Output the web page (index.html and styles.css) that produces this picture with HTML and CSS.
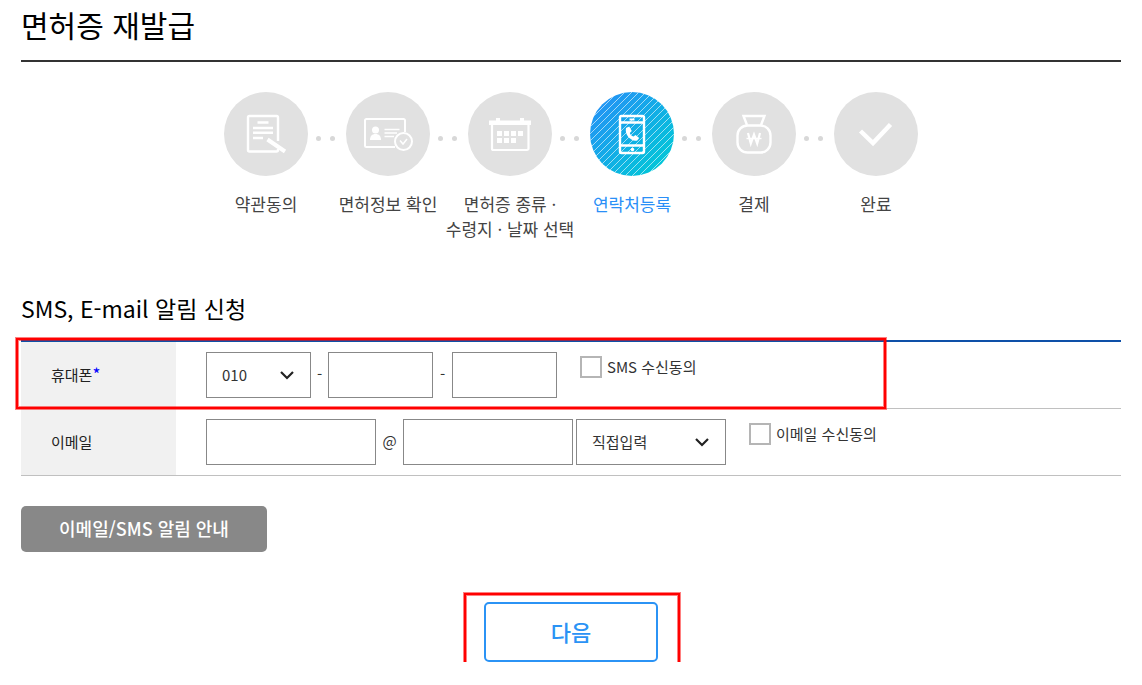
FILE: index.html
```html
<!DOCTYPE html>
<html lang="ko">
<head>
    <meta charset="UTF-8">
    <meta name="viewport" content="width=device-width, initial-scale=1.0">
    <title>면허증 재발급</title>
    <link rel="stylesheet" href="styles.css">
</head>
<body>

<div class="container">
    <h1>면허증 재발급</h1>

    <ol class="steps">
        <li>
            <span class="circle">
                <svg width="84" height="84" viewBox="0 0 84 84" fill="none" stroke="#fff" stroke-width="2.4">
                    <path d="M54 49V25.5a1.500 1.500 0 0 0-1.500-1.500H25.500a1.500 1.500 0 0 0-1.500 1.500V58a1.500 1.500 0 0 0 1.500 1.500H52.500a1.500 1.500 0 0 0 1.500-1.500V57"/>
                    <path d="M33.500 30.500h11M29 36h20M29 40.700h20M29 46h10"/>
                    <path d="M43.500 47.500L61 59.500" stroke-width="4"/>
                </svg>
            </span>
            <span class="label">약관동의</span>
        </li>
        <li>
            <span class="circle">
                <svg width="84" height="84" viewBox="0 0 84 84" fill="none" stroke="#fff" stroke-width="2">
                    <path d="M59 40V28.500a1.500 1.500 0 0 0-1.500-1.500H20.500a1.500 1.500 0 0 0-1.500 1.500V53.500a1.500 1.500 0 0 0 1.500 1.500H49"/>
                    <circle cx="29.500" cy="38" r="3.500" fill="#fff" stroke="none"/>
                    <path d="M24 48c0-4 2-6 5.500-6s5.500 2 5.500 6z" fill="#fff" stroke="none"/>
                    <path d="M38.500 37.500h15M38.500 41h12.500M38.500 44.500h9.500" stroke-width="1.400"/>
                    <circle cx="57.500" cy="49.500" r="8.500"/>
                    <path d="M54 48.500l3 3.500 4-5" stroke-width="1.500"/>
                </svg>
            </span>
            <span class="label">면허정보 확인</span>
        </li>
        <li>
            <span class="circle">
                <svg width="84" height="84" viewBox="0 0 84 84" fill="#fff">
                    <path d="M21 28.500h7V26h4v2.500h20V26h4v2.500h7V33H21z"/>
                    <path d="M24 32v24.500a1.500 1.500 0 0 0 1.500 1.500H59a1.500 1.500 0 0 0 1.500-1.500V32" fill="none" stroke="#fff" stroke-width="2.200"/>
                    <path d="M29 39h5v5h-5zM36 39h5v5h-5zM43 39h5v5h-5zM50 39h5v5h-5zM29 46h5v5h-5zM36 46h5v5h-5zM43 46h5v5h-5z"/>
                </svg>
            </span>
            <span class="label">면허증 종류 ·<br>수령지 · 날짜 선택</span>
        </li>
        <li class="on">
            <span class="circle">
                <svg width="84" height="84" viewBox="0 0 84 84" fill="none" stroke="#fff" stroke-width="2.4">
                    <defs>
                        <pattern id="stripes" width="7" height="7" patternUnits="userSpaceOnUse">
                            <path d="M-1 8L8-1M-1 1L1-1M6 8L8 6" stroke="#fff" stroke-opacity="0.75" stroke-width="0.8"/>
                        </pattern>
                    </defs>
                    <circle cx="42" cy="42" r="42" fill="url(#stripes)" stroke="none"/>
                    <rect x="30" y="24" width="24" height="37" rx="1.500"/>
                    <path d="M30 30.500h24M30 53.500h24"/>
                    <path d="M39.500 27.500h5" stroke-width="2"/>
                    <circle cx="42.500" cy="57.500" r="1.800" fill="#fff" stroke="none"/>
                    <path d="M36 36l3.200-1.500 2.600 4.600-2 1.800c.7 1.700 1.900 2.900 3.700 3.700l2-1.700 3.700 3-2 2.600c-6 1.500-12.800-5.500-11.200-12.500z" fill="#fff" stroke="none"/>
                </svg>
            </span>
            <span class="label">연락처등록</span>
        </li>
        <li>
            <span class="circle">
                <svg width="84" height="84" viewBox="0 0 84 84" fill="none" stroke="#fff" stroke-width="2.4">
                    <path d="M35 33l-3.500-9h21L49 33"/>
                    <rect x="25.500" y="33.500" width="33" height="27" rx="10"/>
                    <path d="M36 41l2.800 10.500L42 42.500l3.200 9L48 41" stroke-width="2.200"/>
                    <path d="M34.500 46.500h15" stroke-width="1.400"/>
                </svg>
            </span>
            <span class="label">결제</span>
        </li>
        <li>
            <span class="circle">
                <svg width="84" height="84" viewBox="0 0 84 84" fill="none" stroke="#fff" stroke-width="4.500">
                    <path d="M26.500 39L39 51l17.500-18.500"/>
                </svg>
            </span>
            <span class="label">완료</span>
        </li>
    </ol>

    <form id="contactForm">
        <h2>SMS, E-mail 알림 신청</h2>
        <div class="table-wrap">
            <table>
                <tr>
                    <th scope="row"><label for="phone1">휴대폰<em>*</em></label></th>
                    <td>
                        <div class="fields">
                            <select id="phone1" class="phone">
                                <option>010</option>
                                <option>011</option>
                                <option>016</option>
                            </select>
                            <span class="sep">-</span>
                            <input type="text" id="phone2" class="phone" aria-label="휴대폰 가운데 번호">
                            <span class="sep wide">-</span>
                            <input type="text" id="phone3" class="phone" aria-label="휴대폰 끝 번호">
                            <span class="agree">
                                <input type="checkbox" id="smsAgree">
                                <label for="smsAgree">SMS 수신동의</label>
                            </span>
                        </div>
                    </td>
                </tr>
                <tr>
                    <th scope="row"><label for="email1">이메일</label></th>
                    <td>
                        <div class="fields">
                            <input type="text" id="email1" class="email">
                            <span class="sep at">@</span>
                            <input type="text" id="email2" class="email" aria-label="이메일 도메인">
                            <select id="emailDomain" class="domain" aria-label="도메인 선택">
                                <option>직접입력</option>
                                <option>naver.com</option>
                                <option>gmail.com</option>
                            </select>
                            <span class="agree">
                                <input type="checkbox" id="emailAgree">
                                <label for="emailAgree">이메일 수신동의</label>
                            </span>
                        </div>
                    </td>
                </tr>
            </table>
            <div class="mark mark-row"></div>
        </div>

        <button type="button" class="guide">이메일/SMS 알림 안내</button>

        <div class="next-wrap">
            <button type="submit" class="next">다음</button>
            <div class="mark mark-next"></div>
        </div>
    </form>
</div>

</body>
</html>
```

FILE: styles.css
```css
* {
    box-sizing: border-box;
}
body {
    margin: 0;
    background: #fff;
    color: #333;
    font-family: "Noto Sans CJK KR", sans-serif;
    font-size: 15px;
}
.container {
    padding: 0 21px;
}
h1 {
    margin: 0;
    padding: 2px 0 14px;
    border-bottom: 2px solid #333;
    color: #000;
    font-size: 30px;
    font-weight: 400;
    line-height: 44px;
}
/* Steps */
.steps {
    display: flex;
    justify-content: center;
    margin: 30px 0 0;
    padding: 0;
    list-style: none;
}
.steps li {
    position: relative;
    width: 122px;
    display: flex;
    flex-direction: column;
    align-items: center;
}
.steps li + li::before {
    content: "";
    position: absolute;
    top: 44px;
    left: -11px;
    width: 5px;
    height: 5px;
    border-radius: 50%;
    background: #d8d8d8;
    box-shadow: 14px 0 #d8d8d8;
}
.circle {
    width: 84px;
    height: 84px;
    border-radius: 50%;
    background: #e1e1e1;
}
.circle svg {
    display: block;
}
.on .circle {
    background: linear-gradient(135deg, #2196f3 15%, #00c8d7 90%);
}
.label {
    margin-top: 15px;
    color: #444;
    font-size: 17px;
    line-height: 25px;
    text-align: center;
    white-space: nowrap;
}
.on .label {
    color: #2a8ff7;
}
/* Form */
h2 {
    margin: 50px 0 15px;
    color: #000;
    font-size: 23px;
    font-weight: 400;
    line-height: 34px;
}
.table-wrap {
    position: relative;
}
table {
    width: 100%;
    border-collapse: separate;
    border-spacing: 0;
    border-top: 2px solid #0e50a8;
}
th, td {
    height: 67px;
    padding: 0 0 0 30px;
    border-bottom: 1px solid #c0c0c0;
    text-align: left;
    font-weight: 400;
}
th {
    width: 155px;
    padding-bottom: 2px;
    background: #f1f1f1;
    color: #222;
}
th em {
    color: #00f;
    font-size: 17px;
    font-style: normal;
    line-height: 1;
}
.fields {
    display: flex;
    align-items: center;
}
input[type="text"], select {
    height: 46px;
    margin: 0;
    padding: 0 15px;
    border: 1px solid #888;
    border-radius: 0;
    background: #fff;
    color: #333;
    font-family: inherit;
    font-size: 15px;
}
select {
    appearance: none;
    padding-bottom: 2px;
    background: url("data:image/svg+xml,%3Csvg xmlns='http://www.w3.org/2000/svg' width='14' height='9'%3E%3Cpath d='M1 1l6 6 6-6' fill='none' stroke='%23222' stroke-width='2.2'/%3E%3C/svg%3E") no-repeat right 16px center;
}
.phone {
    width: 105px;
}
.email {
    width: 170px;
}
.fields .domain {
    width: 150px;
    margin-left: 3px;
}
.sep {
    width: 17px;
    padding-bottom: 3px;
    text-align: center;
}
.sep.wide {
    width: 19px;
}
.sep.at {
    width: 27px;
}
.agree {
    display: flex;
    align-items: center;
    align-self: flex-start;
    gap: 5px;
    height: 22px;
    margin: 4px 0 0 23px;
}
.agree label {
    padding-bottom: 2px;
}
.agree input {
    appearance: none;
    width: 22px;
    height: 22px;
    margin: 0;
    border: 2px solid #b5b5b5;
    background: #fff;
}
.agree input:checked {
    background: #2a8ff7;
}
/* Buttons */
button {
    font-family: inherit;
    cursor: pointer;
}
.guide {
    display: block;
    width: 246px;
    height: 46px;
    margin-top: 30px;
    padding: 0 0 2px;
    border: none;
    border-radius: 5px;
    background: #888;
    color: #fff;
    font-size: 18px;
    font-weight: 500;
}
.next-wrap {
    position: relative;
    width: 174px;
    margin: 50px auto 0;
}
.next {
    display: block;
    width: 100%;
    height: 60px;
    padding: 0 0 2px;
    border: 2px solid #2b93f5;
    border-radius: 5px;
    background: #fff;
    color: #2b93f5;
    font-size: 22px;
    font-weight: 500;
}
/* Red marks */
.mark {
    position: absolute;
    border: 2px solid #f00;
    box-shadow: 0 0 0 1px rgba(255, 0, 0, 0.5), inset 0 0 0 1px rgba(255, 0, 0, 0.5);
    pointer-events: none;
}
.mark-row {
    top: -2px;
    left: -5px;
    width: 870px;
    height: 71px;
}
.mark-next {
    top: -9px;
    left: -20px;
    width: 216px;
    height: 79px;
}
```
